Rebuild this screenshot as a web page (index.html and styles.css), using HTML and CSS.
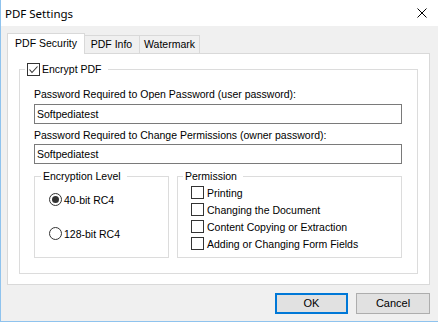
FILE: index.html
```html
<!DOCTYPE html>
<html lang="en">
<head>
  <title>PDF Settings</title>
  <meta charset="utf-8">
  <link rel="stylesheet" href="styles.css">
</head>
<body>
  <div class="window">
    <div class="titlebar">
      <span class="title">PDF Settings</span>
      <svg class="close" width="10" height="10" viewBox="0 0 10 10">
        <path d="M0.5 0.5 L9.5 9.5 M9.5 0.5 L0.5 9.5" stroke="#000" stroke-width="1" fill="none"/>
      </svg>
    </div>

    <div class="client">
      <div class="tabs">
        <div class="tab selected">PDF Security</div>
        <div class="tab info">PDF Info</div>
        <div class="tab mark">Watermark</div>
      </div>

      <div class="panel">
        <fieldset class="group encrypt">
          <legend>
            <span class="check"><svg width="11" height="11" viewBox="0 0 11 11"><polyline points="1.5,5.5 4,8.5 9.5,2.5" stroke="#333" stroke-width="1.1" fill="none"/></svg></span>
            <span>Encrypt PDF</span>
          </legend>
          <div class="encrypt-body">
            <div class="label">Password Required to Open Password (user password):</div>
            <div class="input first">Softpediatest</div>
            <div class="label second">Password Required to Change Permissions (owner password):</div>
            <div class="input">Softpediatest</div>

            <div class="subgroups">
              <fieldset class="group level">
                <legend>Encryption Level</legend>
                <div class="option">
                  <span class="radio on"></span>
                  <span>40-bit RC4</span>
                </div>
                <div class="option last">
                  <span class="radio"></span>
                  <span>128-bit RC4</span>
                </div>
              </fieldset>

              <fieldset class="group perm">
                <legend>Permission</legend>
                <div class="item"><span class="check"></span><span>Printing</span></div>
                <div class="item"><span class="check"></span><span>Changing the Document</span></div>
                <div class="item"><span class="check"></span><span>Content Copying or Extraction</span></div>
                <div class="item"><span class="check"></span><span>Adding or Changing Form Fields</span></div>
              </fieldset>
            </div>
          </div>
        </fieldset>
      </div>

      <div class="buttons">
        <div class="button default">OK</div>
        <div class="button">Cancel</div>
      </div>
    </div>
  </div>
</body>
</html>
```

FILE: styles.css
```css
*, *::before, *::after {
  box-sizing: border-box;
}

body {
  margin: 0;
  background: #f0f0f0;
  color: #000000;
  font-family: "Liberation Sans", Arial, sans-serif;
  font-size: 10.5px;
}

.window {
  width: 438px;
  height: 322px;
  border-left: 1px solid #8fc3ee;
  border-bottom: 1px solid #8fc3ee;
  background: #f0f0f0;
  overflow: hidden;
}

.titlebar {
  height: 26px;
  background: #ffffff;
  display: flex;
  align-items: center;
  justify-content: space-between;
  padding: 0 11px 0 4px;
}

.title {
  font-family: "Noto Sans", sans-serif;
  font-size: 11.5px;
}

.close {
  display: block;
}

.client {
  padding: 7px 8px 0 6px;
}

.tabs {
  display: flex;
  align-items: flex-end;
  height: 21px;
}

.tab {
  height: 18px;
  margin-bottom: 1px;
  border: 1px solid #d9d9d9;
  border-bottom: none;
  background: #f0f0f0;
  line-height: 17px;
  text-align: center;
}

.tab.selected {
  position: relative;
  z-index: 1;
  width: 78px;
  height: 21px;
  margin-bottom: 0;
  background: #ffffff;
  line-height: 19px;
}

.tab.info {
  width: 56px;
  margin-left: -1px;
  border-left: none;
}

.tab.mark {
  width: 61px;
  margin-left: -1px;
}

.panel {
  margin-top: -1px;
  border: 1px solid #d9d9d9;
  background: #ffffff;
  padding: 8px 11px 10px 11px;
}

fieldset.group {
  margin: 0;
  padding: 0;
  min-width: 0;
  border: 1px solid #dcdcdc;
}

.group legend {
  line-height: 13px;
  padding: 0 2px;
}

.encrypt legend {
  display: flex;
  align-items: center;
  gap: 2px;
  line-height: 14px;
  margin-left: 5px;
  padding: 0 6px 0 2px;
}

.check {
  display: inline-flex;
  align-items: center;
  justify-content: center;
  width: 13px;
  height: 13px;
  border: 1px solid #333333;
  background: #ffffff;
  flex: none;
}

.check svg {
  display: block;
}

.encrypt-body {
  padding: 12px 15px 15px 14px;
}

.label {
  line-height: 13px;
}

.label.second {
  margin-top: 5px;
}

.input {
  height: 20px;
  margin-top: 3px;
  border: 1px solid #7a7a7a;
  padding-left: 2px;
  line-height: 18px;
}

.label.second + .input {
  margin-top: 2px;
}

.subgroups {
  display: flex;
  gap: 8px;
  margin-top: 5px;
}

fieldset.level {
  width: 135px;
  padding: 10px 0 17px 14px;
}

.level legend {
  margin-left: -8px;
}

.option {
  display: flex;
  align-items: center;
  gap: 2px;
  height: 13px;
}

.option.last {
  margin-top: 21px;
}

.radio {
  width: 13px;
  height: 13px;
  border: 1px solid #333333;
  border-radius: 50%;
  background: #ffffff;
  display: flex;
  align-items: center;
  justify-content: center;
  flex: none;
}

.radio.on::after {
  content: "";
  width: 7px;
  height: 7px;
  border-radius: 50%;
  background: #333333;
}

fieldset.perm {
  flex: 1;
  padding: 3px 0 6px 13px;
}

.perm legend {
  margin-left: -8px;
}

.item {
  display: flex;
  align-items: center;
  gap: 3px;
  height: 13px;
  margin-bottom: 4px;
}

.item:last-child {
  margin-bottom: 0;
}

.buttons {
  display: flex;
  justify-content: flex-end;
  gap: 8px;
  margin-top: 8px;
}

.button {
  width: 74px;
  height: 21px;
  border: 1px solid #adadad;
  background: #e1e1e1;
  text-align: center;
  line-height: 19px;
  font-size: 11px;
}

.button.default {
  width: 73px;
  border: 2px solid #0078d7;
  line-height: 17px;
}
```
